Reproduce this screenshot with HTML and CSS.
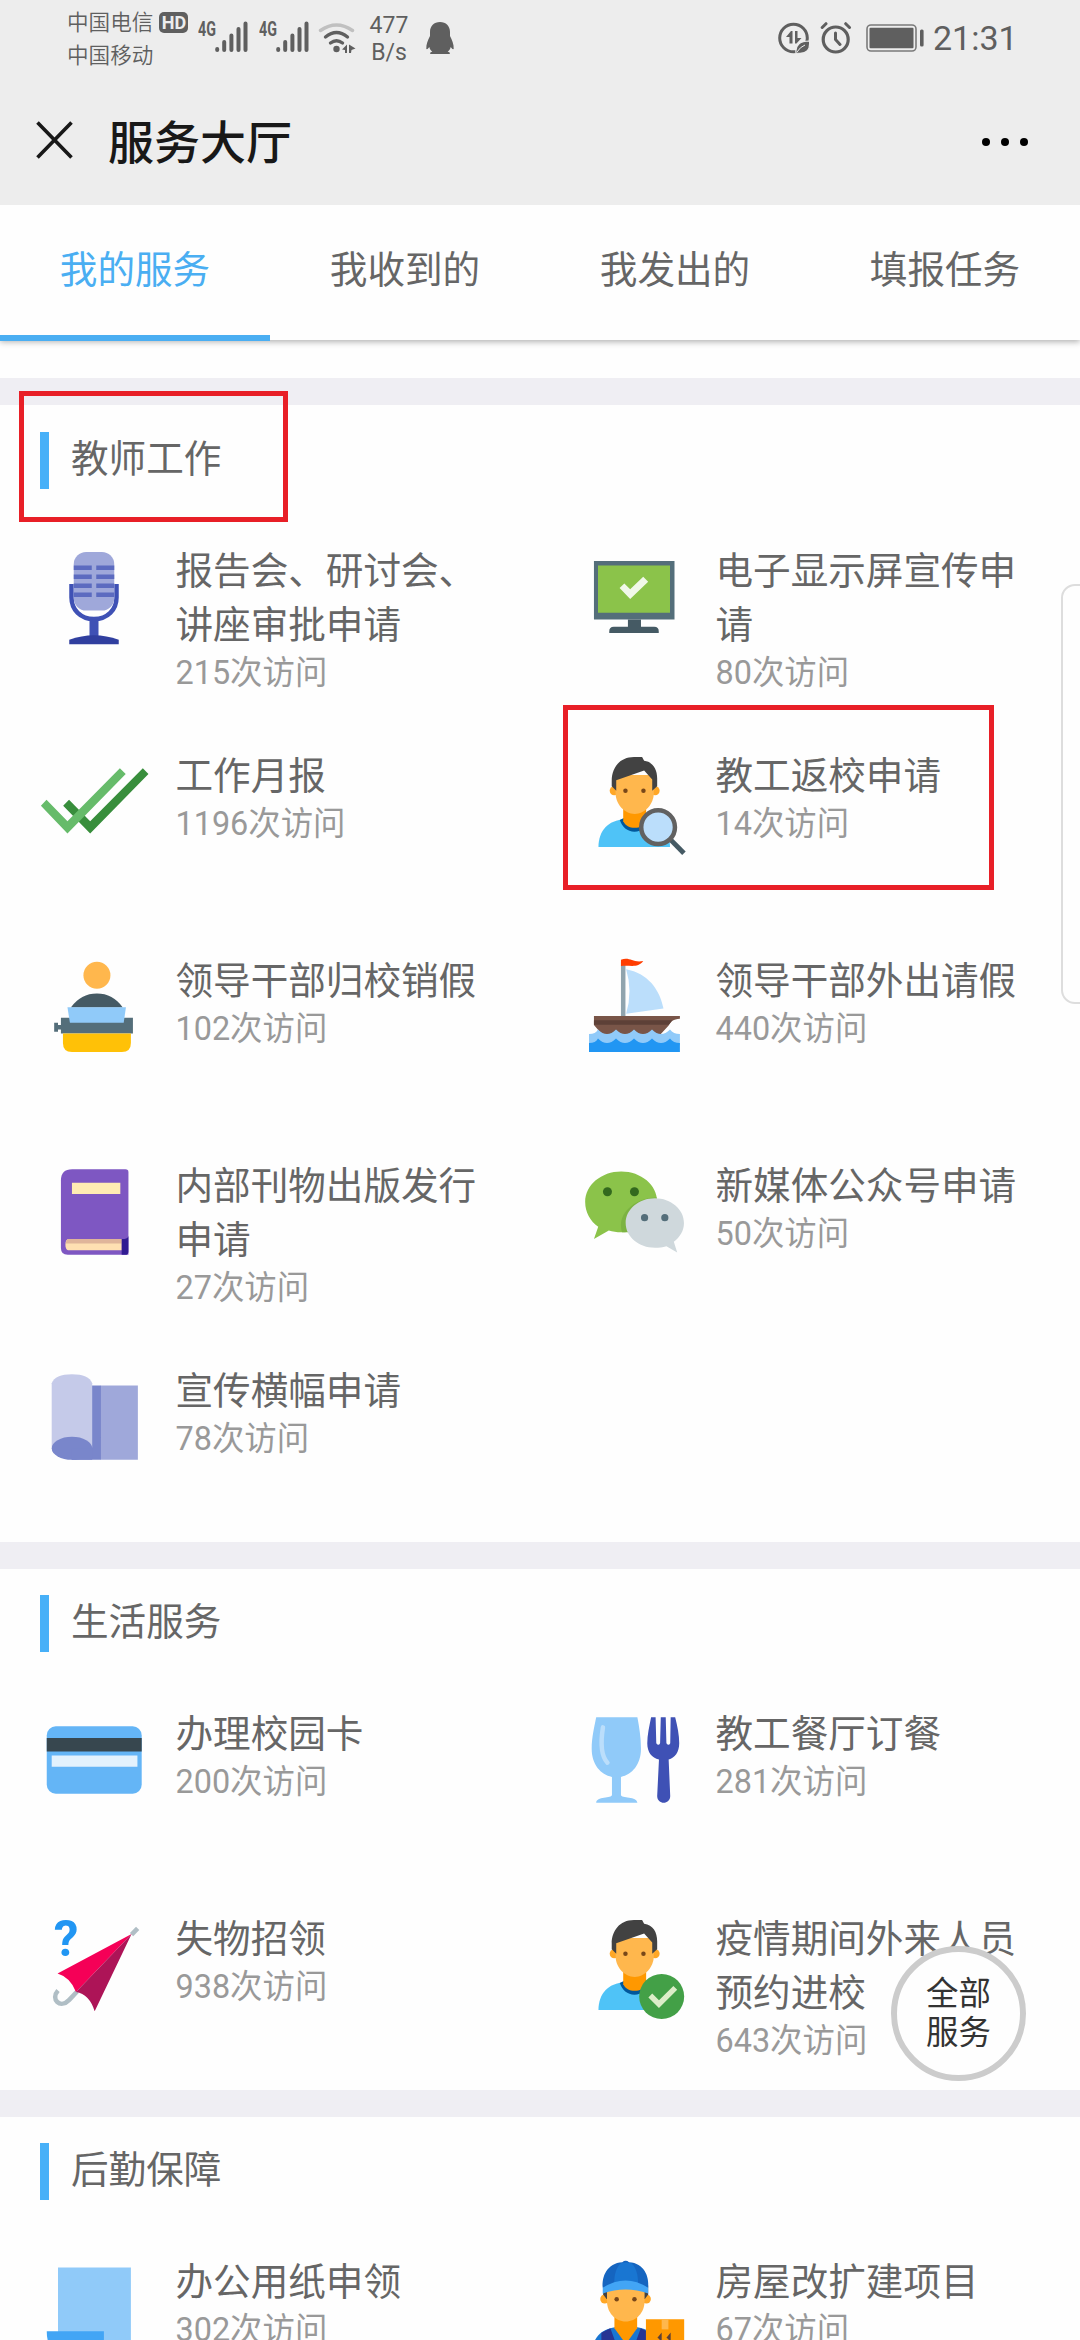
FILE: index.html
```html
<!DOCTYPE html>
<html lang="zh-CN">
<head>
<meta charset="utf-8">
<title>服务大厅</title>
<link rel="stylesheet" href="styles.css">
</head>
<body>
<div class="screen">
  <header class="top">
    <div class="status">
      <div class="carriers">
        <div class="carrier">中国电信<span class="hd">HD</span></div>
        <div class="carrier">中国移动</div>
      </div>
      <div class="signal">
        <span class="net">4G</span>
        <svg class="bars" viewBox="0 0 33 32"><path d="M2.2 28v1M9.2 21v8M16.4 14.5V29M23.5 8v21M30.5 2.500V29"/></svg>
      </div>
      <div class="signal">
        <span class="net">4G</span>
        <svg class="bars" viewBox="0 0 33 32"><path d="M2.2 28v1M9.2 21v8M16.4 14.5V29M23.5 8v21M30.5 2.500V29"/></svg>
      </div>
      <svg class="wifi" viewBox="0 0 38 32"><g fill="none" stroke-width="3.400" stroke-linecap="round"><path stroke="#c0c0c0" d="M2.500 8.500Q18.500-2.500 34.500 8.500"/><path stroke="#5f5f5f" d="M7.500 15Q18.500 6 29.500 15M12.500 21q6-4.500 12 0"/></g><circle cx="18.500" cy="27" r="3.200" fill="#5f5f5f"/><path fill="#5f5f5f" d="M24 27.500l5-5v8.500h-2v-3zM31 22.500l6.500 4-4 1.500-.5 3h-2z"/></svg>
      <div class="speed"><span>477</span><span>B/s</span></div>
      <svg class="qq" viewBox="0 0 28 34"><path fill="#5f5f5f" d="M14 0C8 0 4 4 4 10v4C2 18 0 22 .3 27c1 .5 2-.5 3-2 .5 2 1.500 3.500 3 4.500C4 30.500 3.500 31 4.500 32h19c1-1 .5-1.500-1.800-2.500 1.500-1 2.500-2.500 3-4.500 1 1.500 2 2.500 3 2 .3-5-1.700-9-3.700-13v-4C24 4 20 0 14 0z"/></svg>
      <div class="status-right">
        <svg class="saver" viewBox="0 0 32 32"><circle cx="15.500" cy="16" r="13.800" fill="none" stroke="#5f5f5f" stroke-width="3"/><path fill="#5f5f5f" d="M8 15l5-6h1.500v12.500h-3V15zM17 9h2.500v7h4L18.500 21.500H17z"/><path fill="#5f5f5f" stroke="#ededed" stroke-width="1.200" d="M18 31c-1-8 4-12 13.500-12 .8 8-2 14-13.500 12z"/><path fill="none" stroke="#ededed" stroke-width="1" d="M19 30q3-5 8-7"/></svg>
        <svg class="alarm" viewBox="0 0 32 32"><g fill="none" stroke="#5f5f5f" stroke-linecap="round"><circle cx="15.700" cy="17.500" r="12.500" stroke-width="3.200"/><path stroke-width="3" d="M15.500 11v6.500l4.500 5M2.200 5.500l3.800-3.800M29.500 5.500l-3.800-3.800"/></g></svg>
        <svg class="battery" viewBox="0 0 58 28"><rect x="1" y="1" width="49" height="26" rx="4" fill="none" stroke="#7a7a7a" stroke-width="1.600"/><rect x="3.500" y="3.700" width="44" height="20.500" rx="1" fill="#5f5f5f"/><rect x="54" y="5.500" width="3.600" height="17" rx="1.500" fill="#5f5f5f"/></svg>
        <span class="clock">21:31</span>
      </div>
    </div>
    <div class="titlebar">
      <svg class="close" viewBox="0 0 37 38"><path d="M1.500 1.500l34 35M35.500 1.500l-34 35" stroke="#181818" stroke-width="3.600"/></svg>
      <h1 class="title">服务大厅</h1>
      <svg class="more" viewBox="0 0 46 10"><circle cx="4" cy="5" r="4"/><circle cx="23" cy="5" r="4"/><circle cx="42" cy="5" r="4"/></svg>
    </div>
  </header>

  <nav class="tabs">
    <a class="tab tab-active">我的服务</a>
    <a class="tab">我收到的</a>
    <a class="tab">我发出的</a>
    <a class="tab">填报任务</a>
  </nav>

  <main class="content">
    <section class="section">
      <h2 class="heading">教师工作</h2>
      <div class="grid">
        <div class="item">
          <svg class="icon" viewBox="0 0 48 48"><path fill="none" stroke="#3f51b5" stroke-width="2" d="M14 18.200v6c0 5.500 4 9.600 10 9.600s10-4.100 10-9.600v-6"/><path fill="#3f51b5" d="M22 34h4v8h-4z"/><rect x="15" y="4" width="18" height="26" rx="5.500" fill="#9fa8da"/><path fill="#5c6bc0" d="M15 10h8v2h-8zM25 10h8v2h-8zM15 14h8v2h-8zM25 14h8v2h-8zM15 18h8v2h-8zM25 18h8v2h-8zM15 22h8v2h-8zM25 22h8v2h-8z"/><path fill="#303f9f" d="M13 45v-2q11-4 22 0v2z"/></svg>
          <div class="info"><div class="name">报告会、研讨会、讲座审批申请</div><div class="visits">215次访问</div></div>
        </div>
        <div class="item">
          <svg class="icon" viewBox="0 0 48 48"><path fill="#546e7a" d="M6.200 8H42v26H6.200z"/><path fill="#8bc34a" d="M8 10h32v21H8z"/><path fill="#455a64" d="M21.300 34h5.800v3.200H33q2 0 2 2V40H13v-.8q0-2 2-2h6.300z"/><path fill="#f1f8e9" d="M17.600 20l2.100-2 2.600 2.500 5.800-5.500 2.200 2.200-8 7.700z"/></svg>
          <div class="info"><div class="name">电子显示屏宣传申请</div><div class="visits">80次访问</div></div>
        </div>
        <div class="item">
          <svg class="icon" viewBox="0 0 48 48"><path fill="#388e3c" d="M10.300 25.700l2.600-2.700 9.400 9.500L45.700 9l2.500 2.600L22.300 38z"/><path fill="#66bb6a" d="M.4 25.700L2.900 23l9.300 9.500L35.500 9l2.600 2.600L12.200 38z"/></svg>
          <div class="info"><div class="name">工作月报</div><div class="visits">1196次访问</div></div>
        </div>
        <div class="item">
          <svg class="icon" viewBox="0 0 48 48"><path fill="#4fc3f7" d="M8.200 44c0-7 4-12 12-12.500h8C36 32 40 37 40 44z"/><path fill="#01579b" d="M17.700 32l2-1h9l2 1c-1 3-3.300 5.200-6.500 5.200s-5.500-2.200-6.500-5.200z"/><path fill="#ff9800" d="M19.200 26h10.200v6.500c-1 2-2.800 2.900-5.100 2.900s-4.100-.9-5.100-2.900z"/><g fill="#ffa726"><circle cx="15.200" cy="19" r="2"/><circle cx="33.400" cy="19" r="2"/></g><path fill="#ffb74d" d="M15.800 12h17v8c0 5-4 9.300-8.500 9.300S15.800 25 15.800 20z"/><path fill="#424242" d="M24 4c-6.500 0-9.900 5-9.900 10.500V17l2 2v-4.700L28.500 10l3.600 4v5l2.200-2v-3.500c0-4-1.800-7.300-5.800-7.800L27.600 4z"/><g fill="#784719"><circle cx="20.200" cy="19" r="1"/><circle cx="28.200" cy="19" r="1"/></g><path stroke="#455a64" stroke-width="2.200" d="M40 40.500l6.200 6.300"/><circle cx="34.700" cy="35.200" r="7.500" fill="#bbdefb" stroke="#616161" stroke-width="2"/></svg>
          <div class="info"><div class="name">教工返校申请</div><div class="visits">14次访问</div></div>
          <div class="mark mark-item"></div>
        </div>
        <div class="item">
          <svg class="icon" viewBox="0 0 48 48"><circle cx="25.300" cy="9.900" r="6" fill="#ffb74d"/><path fill="#455a64" d="M13.700 24.200q4.500-6.200 11.600-6.200t11.500 6.200z"/><path fill="#546e7a" d="M9.300 28.800h32v7h-32zM6.300 31H8v1h1.500v2H8v1H6.300z"/><path fill="#90caf9" d="M12.200 24.100h26L37.200 31H13.300z"/><path fill="#ffc107" d="M10.200 35.800h30.200V40q0 4-4 4H14.200q-4 0-4-4z"/></svg>
          <div class="info"><div class="name">领导干部归校销假</div><div class="visits">102次访问</div></div>
        </div>
        <div class="item">
          <svg class="icon" viewBox="0 0 48 48"><path fill="#90a4ae" d="M18.200 4h2v24h-2z"/><path fill="#ff3d00" d="M18.200 3c4-1.500 5 1.500 9.900.6-2.500 3.400-6 1.600-9.900 2.200z"/><path fill="#bbdefb" d="M20.500 7.200C30 9 35.500 16 37.100 24.700L20.500 27q3-10 0-19.800z"/><path fill="#795548" d="M6.200 28h38.200v1.200c-3 .2-4 1.300-5 3L35 37H10.500l-4.300-5z"/><path fill="#5d4037" d="M6.200 29.900H41l-1.600 2H6.200z"/><path fill="#90caf9" d="M4 36q3 0 4-2 4 4 8 0 4 4 8 0 4 4 8 0 4 4 8 0 1.500 2 4.400 2v5H4z"/><path fill="#2196f3" d="M4 40q3 0 4-2 4 4 8 0 4 4 8 0 4 4 8 0 4 4 8 0 1.500 2 4.400 2v4H4z"/></svg>
          <div class="info"><div class="name">领导干部外出请假</div><div class="visits">440次访问</div></div>
        </div>
        <div class="item">
          <svg class="icon" viewBox="0 0 48 48"><path fill="#7e57c2" d="M14.300 5H38q1.300 0 1.300 1.200V43h-27q-3 0-3-3V10q0-5 5-5z"/><path fill="#ffecb3" d="M14.200 11h21.500v5H14.200z"/><path fill="#ffe0b2" d="M12.500 36h23.900v5H12.500q-1.200-.4-1.200-2.500t1.200-2.500z"/><path fill="#e0b59a" d="M12.300 36h24v2H11.500q0-1.400.8-2z"/><path fill="#311b92" d="M36.300 36q3 0 3-1.500v7q0 1.500-1.500 1.500h-1.500z"/></svg>
          <div class="info"><div class="name">内部刊物出版发行申请</div><div class="visits">27次访问</div></div>
        </div>
        <div class="item">
          <svg class="icon" viewBox="0 0 48 48"><path fill="#8bc34a" d="M18.300 6c8.900 0 16 6 16 13.500S27.200 33 18.300 33c-2 0-3.800-.3-5.500-.8L6.200 36l1.900-5.500C4.500 28 2.300 24 2.300 19.500 2.300 12 9.500 6 18.300 6z"/><path fill="#7cb342" d="M34.200 17.500c-9 0-16 6-16 12 0 1.200.1 2.300.5 3.500h4z"/><g fill="#33691e"><circle cx="12.200" cy="15" r="2"/><circle cx="24.200" cy="15" r="2"/></g><path fill="#cfd8dc" d="M33.300 17.900c7.100 0 12.900 4.900 12.900 11 0 3.500-1.800 6.300-4.500 8.300l1.500 4.800-4.800-2.800c-1.600.5-3.300.7-5.100.7-7.200 0-13-4.900-13-11s5.800-11 13-11z"/><g fill="#546e7a"><circle cx="28.700" cy="26.500" r="1.600"/><circle cx="37.700" cy="26.500" r="1.600"/></g></svg>
          <div class="info"><div class="name">新媒体公众号申请</div><div class="visits">50次访问</div></div>
        </div>
        <div class="item">
          <svg class="icon" viewBox="0 0 48 48"><path fill="#9fa8da" d="M27 10h16.500v33H27z"/><path fill="#7986cb" d="M21 10h6.100v33H14V33h7z"/><path fill="#c5cae9" d="M5.200 9q1.500-4 9-4t9 4v28.500h-18z"/><ellipse cx="14.200" cy="37.900" rx="9" ry="5.100" fill="#7986cb"/><path fill="#7986cb" d="M14.200 38h9v5h-9z"/></svg>
          <div class="info"><div class="name">宣传横幅申请</div><div class="visits">78次访问</div></div>
        </div>
      </div>
      <div class="mark mark-heading"></div>
    </section>

    <section class="section">
      <h2 class="heading">生活服务</h2>
      <div class="grid">
        <div class="item">
          <svg class="icon" viewBox="0 0 48 48"><rect x="3" y="9" width="42.200" height="30" rx="4" fill="#64b5f6"/><path fill="#37474f" d="M3 14.200h42.200v6H3z"/><path fill="#e3f2fd" d="M5.200 22h38.100v5H5.200z"/></svg>
          <div class="info"><div class="name">办理校园卡</div><div class="visits">200次访问</div></div>
        </div>
        <div class="item">
          <svg class="icon" viewBox="0 0 48 48"><path fill="#90caf9" d="M7.200 5h18.300c.8 4 1.600 9 1.600 14 0 7-4 11.500-8.900 12.500v8c0 1.500 7.300.5 7.300 3.500H7.200c0-3 7-2 7-3.500v-8c-5-1-9-5.500-9-12.500 0-5 1.200-10 2-14z"/><path fill="none" stroke="#bbdefb" stroke-width="2" stroke-linecap="round" d="M10.200 9.500c-.8 5-1.500 12 2 15.700"/><path fill="#3f51b5" d="M31.600 5h2l.3 11.500q1 1.400 1.700 0L35.900 5h2.200l.3 11.500q1 1.400 1.700 0L40.300 5h2c1 4 1.800 8 1.800 11.500 0 4-2 6.500-4.700 7.300L40.100 40c0 4-5.800 4-5.800 0l.8-16.200c-3.200-.8-5.200-3.300-5.200-7.300 0-3.500.9-7.500 1.700-11.500z"/></svg>
          <div class="info"><div class="name">教工餐厅订餐</div><div class="visits">281次访问</div></div>
        </div>
        <div class="item">
          <svg class="icon" viewBox="0 0 48 48"><path fill="none" stroke="#b0bec5" stroke-width="2" d="M16.500 35.800l-3.500 3.700c-4 4.200-8.500-.3-5-4.200M40.700 10.500l2.700-2.800"/><path fill="#f50057" d="M7.800 27.800L40.700 10.200 16 36q-2.500-6.500-8.200-8.200z"/><path fill="#ad1457" d="M40.700 10.200L24.300 44.600Q22 37 16 36z"/><text class="ask" x="6.100" y="19.800">?</text></svg>
          <div class="info"><div class="name">失物招领</div><div class="visits">938次访问</div></div>
        </div>
        <div class="item">
          <svg class="icon" viewBox="0 0 48 48"><path fill="#4fc3f7" d="M8.200 44c0-7 4-12 12-12.500h8C36 32 40 37 40 44z"/><path fill="#01579b" d="M17.700 32l2-1h9l2 1c-1 3-3.300 5.200-6.500 5.200s-5.500-2.200-6.500-5.200z"/><path fill="#ff9800" d="M19.200 26h10.200v6.500c-1 2-2.800 2.900-5.100 2.900s-4.100-.9-5.100-2.900z"/><g fill="#ffa726"><circle cx="15.200" cy="19" r="2"/><circle cx="33.400" cy="19" r="2"/></g><path fill="#ffb74d" d="M15.800 12h17v8c0 5-4 9.300-8.500 9.300S15.800 25 15.800 20z"/><path fill="#424242" d="M24 4c-6.500 0-9.900 5-9.900 10.500V17l2 2v-4.700L28.500 10l3.600 4v5l2.200-2v-3.500c0-4-1.800-7.300-5.800-7.800L27.600 4z"/><g fill="#784719"><circle cx="20.200" cy="19" r="1"/><circle cx="28.200" cy="19" r="1"/></g><circle cx="36.300" cy="38" r="10" fill="#43a047"/><path fill="#dcedc8" d="M30.400 38.400l1.700-1.700 3 3 6.400-6.400 1.700 1.700-8.100 8.100z"/></svg>
          <div class="info"><div class="name">疫情期间外来人员预约进校</div><div class="visits">643次访问</div></div>
        </div>
      </div>
    </section>

    <section class="section">
      <h2 class="heading">后勤保障</h2>
      <div class="grid">
        <div class="item">
          <svg class="icon" viewBox="0 0 48 48"><path fill="#90caf9" d="M8 6h32.400v32q0 5-5 5H8z"/><path fill="#42a5f5" d="M3 34.300h25.400V38q0 5 5 5H9q-6 0-6-8.700z"/></svg>
          <div class="info"><div class="name">办公用纸申领</div><div class="visits">302次访问</div></div>
        </div>
        <div class="item">
          <svg class="icon" viewBox="0 0 48 48"><path fill="#1976d2" d="M5.500 44c0-6 3-10.500 10-11.500h10c7 1 10 5.500 10 11.500z"/><path fill="#283593" d="M9.500 35l4-2 4 11h-8zM31 35l-4-2-4 11h8z"/><path fill="#ff9800" d="M15.300 26h10.100v7l-5 7-5.100-7z"/><g fill="#ffa726"><circle cx="11" cy="20" r="2"/><circle cx="29.500" cy="20" r="2"/></g><path fill="#424242" d="M10.300 14h20v4l-1.500 2h-17l-1.500-2z"/><path fill="#ffb74d" d="M12 15h16.700v6c0 5-3.700 9-8.400 9S12 26 12 21z"/><path fill="#1565c0" d="M10.100 15c-.5-5 2-11 8.700-11.300q1.500-1.300 3 0C28.500 4 30.800 10 30.300 15z"/><path fill="#1976d2" d="M18 4.200q2.500-.8 5 0c2 2 2.800 5 2.800 9H15.200c0-4 .8-7 2.800-9z"/><path fill="#42a5f5" d="M10.100 15q10.200-6.500 20.200 0v2.500q-10-3.500-20.200 0z"/><g fill="#784719"><circle cx="16.300" cy="20.100" r="1"/><circle cx="24.200" cy="20.100" r="1"/></g><path fill="#ff9800" d="M29.300 29h17v17h-17z"/><path fill="#ffb74d" d="M36.300 29h3v4.500h-3z"/><path fill="none" stroke="#5d4037" stroke-width="1" d="M35.800 39v-2.700l-1 1.200M39.800 39v-2.700l-1 1.200"/></svg>
          <div class="info"><div class="name">房屋改扩建项目</div><div class="visits">67次访问</div></div>
        </div>
      </div>
    </section>
  </main>

  <div class="side-handle"></div>
  <button class="fab"><span>全部</span><span>服务</span></button>
</div>
</body>
</html>
```
FILE: styles.css
```css
* { box-sizing: border-box; }

body {
  margin: 0;
  background: #fefefe;
  font-family: Roboto, "Noto Sans CJK SC", sans-serif;
  color: #666;
}

.screen {
  position: relative;
  width: 1080px;
  height: 2340px;
  overflow: hidden;
  display: flex;
  flex-direction: column;
}

.top {
  flex: none;
  position: relative;
  z-index: 2;
  height: 205px;
  background: #ededed;
}

.status {
  height: 75px;
  padding: 6px 0 0 67px;
  display: flex;
  align-items: flex-start;
  color: #5f5f5f;
}

.carriers { width: 131px; }

.carrier {
  display: flex;
  align-items: center;
  gap: 6px;
  height: 33px;
  font-size: 21.6px;
  font-weight: 350;
  line-height: 33px;
  white-space: nowrap;
}

.hd {
  width: 29px;
  height: 21px;
  border-radius: 5px;
  background: #5f5f5f;
  color: #ededed;
  font-size: 18px;
  font-weight: 700;
  line-height: 21px;
  text-align: center;
}

.signal {
  width: 61px;
  display: flex;
  align-items: flex-start;
  padding-top: 15px;
}

.net {
  width: 17px;
  font: 700 21px/17px Roboto, sans-serif;
  transform: scaleX(.68);
  transform-origin: left;
}

.bars {
  width: 33px;
  height: 32px;
  fill: none;
  stroke: #5f5f5f;
  stroke-width: 4;
  stroke-linecap: round;
}

.wifi { width: 38px; height: 32px; margin: 16px 0 0 -2px; }

.speed {
  width: 44px;
  margin: 6px 0 0 11px;
  display: flex;
  flex-direction: column;
  align-items: center;
  font-size: 23px;
  line-height: 27px;
}

.qq { width: 28px; height: 34px; margin: 16px 0 0 15px; }

.status-right {
  margin: 11px 65px 0 auto;
  height: 42px;
  display: flex;
  align-items: center;
}

.saver { width: 32px; height: 32px; }
.alarm { width: 32px; height: 32px; margin-left: 10px; }
.battery { width: 58px; height: 28px; margin-left: 14px; }
.clock { width: 82px; margin-left: 9px; font-size: 34px; line-height: 42px; }

.titlebar {
  height: 130px;
  padding: 0 52px 0 36px;
  display: flex;
  align-items: center;
}

.close { width: 37px; height: 38px; }

.title {
  margin: 6px 0 0 35px;
  font-size: 46px;
  font-weight: 500;
  line-height: 60px;
  color: #181818;
}

.more { width: 46px; height: 10px; margin: 4px 0 0 auto; }

.tabs {
  flex: none;
  position: relative;
  z-index: 1;
  height: 135px;
  display: grid;
  grid-template-columns: repeat(4, 1fr);
  background: #fefefe;
  box-shadow: 0 2px 6px rgba(0, 0, 0, .3);
}

.tab {
  padding-top: 1px;
  border-bottom: 6px solid transparent;
  font-size: 37.6px;
  line-height: 129px;
  text-align: center;
}

.tab-active { color: #4aaef2; border-color: #4aaef2; }

.content { padding-top: 38px; }

.section {
  position: relative;
  border-top: 27px solid #efeef3;
}

.heading {
  height: 110.6px;
  margin: 0;
  padding: 26.500px 0 0 40px;
  display: flex;
  align-items: flex-start;
  font-size: 37.6px;
  font-weight: 400;
  line-height: 55px;
}

.heading::before {
  content: "";
  width: 9px;
  height: 57px;
  margin-right: 22px;
  background: #47b0f8;
}

.grid {
  display: grid;
  grid-template-columns: 1fr 1fr;
  grid-auto-rows: 205.2px;
}

.item {
  position: relative;
  display: flex;
  align-items: flex-start;
  gap: 27.500px;
  padding: 27px 0 0 40px;
}

.icon { flex: none; width: 108px; height: 108px; overflow: visible; }

.info { width: 325px; padding-top: 1px; }

.name { font-size: 37.6px; line-height: 54px; }

.visits { font-size: 32.4px; line-height: 42px; color: #999; }

.ask { font: 700 22px Roboto, sans-serif; fill: #2196f3; }

.mark {
  position: absolute;
  border: 5px solid #e81f27;
}

.mark-heading { left: 19px; top: -14px; width: 269px; height: 131px; }

.mark-item { left: 23px; top: -16px; width: 431px; height: 185px; }

.side-handle {
  position: absolute;
  left: 1061px;
  top: 584px;
  width: 40px;
  height: 420px;
  border: 2px solid #ddd;
  border-radius: 14px;
  background: #fefefe;
}

.fab {
  position: absolute;
  z-index: 2;
  left: 891px;
  top: 1946px;
  width: 135px;
  height: 135px;
  padding: 0;
  border: 6px solid #ccc;
  border-radius: 50%;
  background: #fefefe;
  display: flex;
  flex-direction: column;
  align-items: center;
  justify-content: center;
  font: 32.4px/38.500px Roboto, "Noto Sans CJK SC", sans-serif;
  color: #333;
}
```
